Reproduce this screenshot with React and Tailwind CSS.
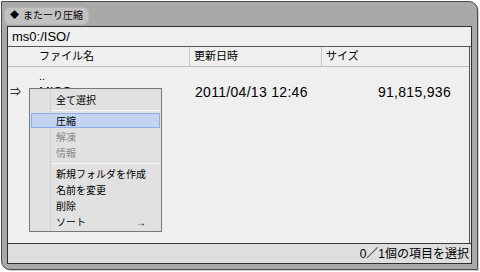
import React from 'react';

const jp = { fontFamily: '"Liberation Sans", "Noto Sans CJK JP", sans-serif' };

const MenuItem = ({ label, active, disabled, arrow }) => (
  <div
    className={`relative flex items-center h-[16px] pl-[26px] pr-[15px] text-[10px] ${
      disabled ? 'text-[#8a8a8a]' : 'text-black'
    }`}
  >
    {active && (
      <div className="absolute inset-x-[1px] top-0 bottom-[1px] bg-[#c3d4f1] border border-[#8eadea]" />
    )}
    <span className="relative">{label}</span>
    {arrow && <span className="relative ml-auto text-[10px] font-bold">→</span>}
  </div>
);

const Sep = () => (
  <div className="h-[5px] flex items-center pl-[22px]">
    <div className="h-px w-full bg-[#f6f6f6]" />
  </div>
);

export default function App() {
  return (
    <div className="w-[480px] h-[272px] bg-white p-px relative" style={jp}>
      <div className="w-[477px] h-[269px] border border-[#4a4a4a] bg-[#a9a9a9] rounded-tr-[9px] rounded-bl-[9px] flex flex-col shadow-[1px_1px_0_#d0d0d0]">
        {/* title */}
        <div className="h-[23px] flex items-center pl-[2px]">
          <div className="h-[18px] mt-[4px] px-[5px] flex items-center gap-[4px] rounded-[6px] bg-[#c2c2c2] border border-[#b5b5b5] text-[10px] text-black">
            <span className="text-[9px]">◆</span>
            <span>またーり圧縮</span>
          </div>
        </div>

        {/* panel */}
        <div className="mx-[5px] mt-[1px] h-[238px] border border-[#2e2e2e] bg-[#efefef] flex flex-col">
          <div className="h-[20px] flex items-center pl-[4px] text-[13px] text-black border-b border-[#555]">
            ms0:/ISO/
          </div>
          <div className="flex-1 flex flex-col mr-[1px] border-r border-[#4d4d63]">
            <div className="h-[20px] flex items-center text-[11px] text-black border-b border-[#bdbdbd]">
              <div className="w-[182px] pl-[31px] h-full flex items-center border-r border-[#c4c4c4]">ファイル名</div>
              <div className="w-[132px] pl-[4px] h-full flex items-center border-r border-[#c4c4c4]">更新日時</div>
              <div className="pl-[4px]">サイズ</div>
            </div>
            <div className="flex-1 pt-[1px]">
              <div className="h-[16px] flex items-center pl-[31px] text-[11px] leading-none">..</div>
              <div className="h-[16px] flex items-center text-[14px] text-black">
                <span className="w-[31px] pl-[2px] text-[11px]">⇒</span>
                <span className="w-[151px] text-[13px]">MISO</span>
                <span className="w-[132px] pl-[5px] tracking-[0.3px]">2011/04/13 12:46</span>
                <span className="w-[129px] text-right tracking-[0.3px]">91,815,936</span>
              </div>
            </div>
          </div>
          <div className="h-[20px] border-t border-[#3a3a3a] bg-[#dedede] flex items-center justify-end pr-[2px] text-[12px] text-black">
            0／1個の項目を選択
          </div>
        </div>
      </div>

      {/* context menu */}
      <div className="absolute left-[29px] top-[88px] w-[133px] h-[144px] bg-[#e1e1e1] border border-[#777] pt-[3px]">
        <div className="absolute left-[20px] top-0 bottom-0 w-px bg-[#cfcfcf]" />
        <MenuItem label="全て選択" />
        <Sep />
        <MenuItem label="圧縮" active />
        <MenuItem label="解凍" disabled />
        <MenuItem label="情報" disabled />
        <Sep />
        <MenuItem label="新規フォルダを作成" />
        <MenuItem label="名前を変更" />
        <MenuItem label="削除" />
        <MenuItem label="ソート" arrow />
      </div>
    </div>
  );
}
